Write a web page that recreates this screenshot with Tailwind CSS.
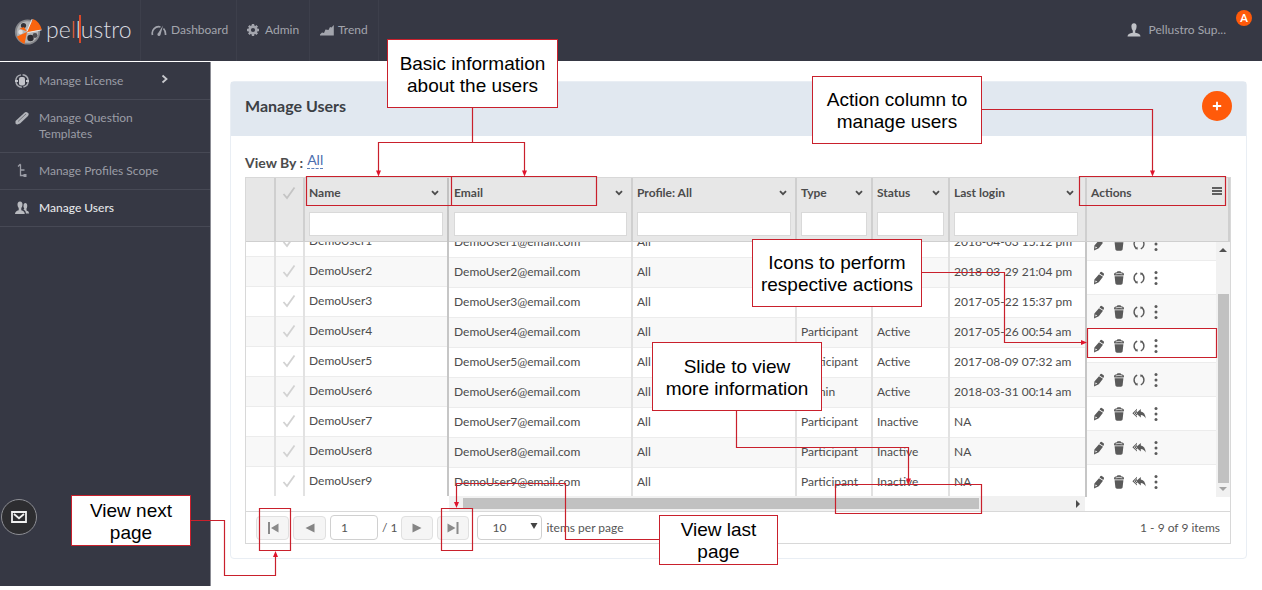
<!DOCTYPE html>
<html lang="en">
<head>
<meta charset="utf-8">
<title>Pellustro - Manage Users</title>
<script src="https://cdn.jsdelivr.net/npm/@tailwindcss/browser@4"></script>
</head>
<body class="relative min-h-screen bg-white font-['Lato',sans-serif] text-[12px] leading-4 text-[#4c4c4c]">
<svg class="hidden" aria-hidden="true">
  <symbol id="check" viewBox="0 0 14 14"><path d="M1.5 8 5 12 12.5 1.5" fill="none" stroke="currentColor" stroke-width="1.8"/></symbol>
  <symbol id="chev" viewBox="0 0 8 6"><path d="M1 1.2 4 4.2 7 1.2" fill="none" stroke="currentColor" stroke-width="1.8"/></symbol>
  <symbol id="pencil" viewBox="0 0 12 14"><path d="M7.3 1.2Q8 .6 8.800 1.100L10.600 2.300Q11.300 2.900 10.900 3.700L10.300 5 6.500 2.600zM6 3.200 10 5.800 5.800 11.200 1 13.400 1.400 8.600z" fill="currentColor"/><path d="M2.600 9.400l1.600 1-1.900 1.100z" fill="#fff"/></symbol>
  <symbol id="trash" viewBox="0 0 12 14"><path d="M1 3.4Q1 1.4 4 1.2L4.4.3H7.6L8 1.2Q11 1.4 11 3.4L10.6 4.4H1.4zM1.6 5.2H10.4L9.6 12.6Q9.4 13.7 8 13.7H4Q2.6 13.7 2.4 12.6z" fill="currentColor"/><path d="M2.6 2.9Q6 1.8 9.4 2.9" stroke="#fff" stroke-width=".7" fill="none"/></symbol>
  <symbol id="cycle" viewBox="0 0 12 14"><path d="M4.2 2.2A5.2 5.2 0 0 0 3.4 11.3M7.8 11.8A5.2 5.2 0 0 0 8.6 2.7" fill="none" stroke="currentColor" stroke-width="1.4"/><path d="M1.8 12 4.800 12.400 4.400 9.800zM10.2 2 7.200 1.600 7.600 4.200z" fill="currentColor"/></symbol>
  <symbol id="reply" viewBox="0 0 14 12"><path d="M5 .8 .4 5.200 5 9.600M8.800 1V3.400Q13.200 4 13.700 10.600 12 7.200 8.800 7.100V9.500L4 5.200z" fill="currentColor"/><path d="M5.600 1.800 2.200 5.200 5.600 8.800" fill="none" stroke="#fff" stroke-width=".7"/></symbol>
  <symbol id="dots" viewBox="0 0 4 16"><circle cx="2" cy="2.500" r="1.500" fill="currentColor"/><circle cx="2" cy="8" r="1.500" fill="currentColor"/><circle cx="2" cy="13.500" r="1.500" fill="currentColor"/></symbol>
</svg>

<header class="flex h-[61px] items-stretch bg-[#363844] text-[#a3a5ad]">
  <a href="#" class="flex w-[141px] items-center border-r border-[#3d3f4b] pl-3.5" aria-label="pellustro">
    <svg class="h-7 w-7 shrink-0" viewBox="0 0 28 28"><circle cx="13.500" cy="15" r="12.600" fill="#85868b"/><circle cx="13.500" cy="15" r="10.800" fill="#b3b4b6"/><circle cx="9.500" cy="8.500" r="2.600" fill="#35343a"/><circle cx="16.500" cy="21" r="3.200" fill="#2c2b31"/><circle cx="6.500" cy="15" r="2.300" fill="#dedede"/><circle cx="21" cy="18.500" r="2.400" fill="#4c4b50"/><path d="M13 14.500 19 2Q25.500 4.500 27.800 12.500L13.500 15.500zM13 15 3 19.500Q5 24.500 10.500 27zM13 14.500 5.500 11.500 10 10z" fill="#f9640f"/><path d="M13 14.500 18.200 2M13.500 15.500 27.500 13" stroke="#fff" stroke-width=".8"/></svg>
    <span class="relative ml-1 -mt-1 text-[23px] leading-7 font-light text-[#dcdde1]">pe<span class="text-[#e8643a]">l</span>lustro<i class="absolute top-0 left-[33px] h-7 w-0.5 bg-[#d9482a]"></i></span>
  </a>
  <nav class="flex">
    <a href="#" class="flex w-24 items-center border-r border-[#3d3f4b] pb-0.5 pl-2.5"><svg class="mr-1 h-3.5 w-4" viewBox="0 0 16 14"><path d="M1.500 12A6.500 6.500 0 0 1 9.500 4M12.500 5.500Q14.800 8 14.500 12" fill="none" stroke="currentColor" stroke-width="1.700"/><path d="M12 2.500 9.600 11.500A1.600 1.600 0 1 1 7.200 10z" fill="currentColor"/></svg>Dashboard</a>
    <a href="#" class="flex w-[73px] items-center border-r border-[#3d3f4b] pb-0.5 pl-2.5"><svg class="mr-1.5 h-3 w-3" viewBox="0 0 12 12"><circle cx="6" cy="6" r="3.400" fill="none" stroke="currentColor" stroke-width="2.600"/><path d="M6 0V2.500M6 9.500V12M0 6H2.500M9.500 6H12M1.800 1.800 3.500 3.500M8.500 8.500l1.700 1.700M10.200 1.800 8.500 3.500M3.500 8.500 1.800 10.200" stroke="currentColor" stroke-width="2.400"/></svg>Admin</a>
    <a href="#" class="flex w-[69px] items-center border-r border-[#3d3f4b] pb-0.5 pl-2.5"><svg class="mr-1 h-3 w-3.5" viewBox="0 0 14 12"><path d="M0 11.500V10.500L2 8.500 4 9 5.500 5.500 8.500 6 10 3 11.500 3.500 13.800 1V11.500z" fill="currentColor"/></svg>Trend</a>
  </nav>
  <div class="ml-auto flex items-center pr-2.5 pb-0.5">
    <svg class="mr-2 h-3.5 w-3.5" viewBox="0 0 14 14"><path d="M7 .3Q9.800 .3 9.600 3.800 9.400 6.500 8.200 7.700V9.800Q13.300 10.400 13.500 13.500H.5Q.7 10.400 5.800 9.800V7.700Q4.600 6.500 4.400 3.800 4.200 .3 7 .3z" fill="#c0c2c7"/></svg>
    <a href="#" class="mr-2.5">Pellustro Sup...</a>
    <span class="mb-6 flex h-4 w-4 items-center justify-center rounded-full bg-[#ff5a0a] text-[11px] font-bold text-white">A</span>
  </div>
</header>

<div class="flex pt-px">
  <aside class="min-h-[524px] w-[210px] shrink-0 bg-[#363844] text-[#9b9da6] shadow-[1px_0_0_#8b8c94]">
    <nav class="flex flex-col pt-px">
      <a href="#" class="flex border-b border-[#474955] py-2.5 pl-3.5"><svg class="mr-[9px] h-4 w-4" viewBox="0 0 16 16"><circle cx="8" cy="8" r="6.200" fill="none" stroke="#a9abb2" stroke-width="1.500" stroke-dasharray="8 1.700"/><rect x="5" y="4" width="6" height="8.500" rx="2" fill="#c3c4ca"/><path d="M1 8h3M12 8h3" stroke="#c3c4ca" stroke-width="2"/></svg><span class="w-[122px]">Manage License</span><svg class="h-3 w-2" viewBox="0 0 8 12"><path d="M1.500 2.500 5.500 6 1.500 9.500" fill="none" stroke="#c8c9ce" stroke-width="1.800"/></svg></a>
      <a href="#" class="flex border-b border-[#474955] py-2.5 pl-3.5"><svg class="mr-[9px] h-4 w-4" viewBox="0 0 16 16"><path d="M1.500 11 11 2.200Q13 1.200 14.600 3.600 15 5 14 6L6 13.600Q3 15.200 1.500 13.500z" fill="#b2b4ba"/><path d="M4 11.500 12 4" stroke="#6b6d76" stroke-width=".9"/></svg><span>Manage Question<br>Templates</span></a>
      <a href="#" class="flex border-b border-[#474955] py-2.5 pl-3.5"><svg class="mr-[9px] h-4 w-4" viewBox="0 0 16 16"><path d="M6.500 1.500V12.500H11M6.500 7H10.500M4 3.500 6.500 1" fill="none" stroke="currentColor" stroke-width="1.300"/><path d="M9.500 11h3v3h-3z" fill="currentColor"/></svg>Manage Profiles Scope</a>
      <a href="#" class="flex border-b border-[#474955] py-2.5 pl-3.5 font-medium text-[#e4e5e8]"><svg class="mr-[9px] h-4 w-4" viewBox="0 0 16 16"><path d="M6 1.500Q8.700 1.500 8.500 5 8.300 7 7.300 8V10.300Q10.500 11 10.800 14H1Q1 11.300 4.700 10.300V8Q3.700 7 3.500 5 3.300 1.500 6 1.500zM11.200 3Q13.500 3 13.200 6.500 13 8 12.500 8.500V10.500Q15 11 15.200 13.500H12Q11.800 10.500 9.500 9.500L10.300 8.500Q9 7 9.600 4.500 10 3 11.200 3z" fill="#b8babf"/></svg>Manage Users</a>
    </nav>
  </aside>

  <main class="min-w-0 flex-1 pt-[19px] pr-[15px] pl-5">
    <section class="rounded border border-[#e9eef4] pb-3.5">
      <div class="flex h-[54px] items-center justify-between bg-[#e1e8f0] px-3.5 pb-1.5">
        <h1 class="text-[16px] leading-5 font-bold text-[#3c4045]">Manage Users</h1>
        <button type="button" aria-label="Add user" class="flex h-[30px] w-[30px] items-center justify-center rounded-full bg-[#ff5a0a]"><svg class="h-2.5 w-2.5" viewBox="0 0 10 10"><path d="M5 .8V9.200M.8 5H9.200" stroke="#fff" stroke-width="1.800"/></svg></button>
      </div>
      <div class="flex h-[41px] items-end gap-1 px-3.5 pb-1.5 text-[14px] leading-4 font-bold"><span>View By :</span><a href="#" class="mb-0.5 border-b border-dashed border-[#5c80bb] font-normal text-[#4b6eae]">All</a></div>

      <div class="mr-[15px] ml-3.5 border border-[#d8d8d8]">
        <div class="flex h-[333px]">
          <!-- frozen left columns -->
          <div class="w-[203px] shrink-0">
            <table class="w-full table-fixed border-collapse">
              <colgroup><col class="w-[29px]"><col class="w-[29px]"><col></colgroup>
              <thead class="bg-[#e7e7e7]"><tr class="h-[63px] border-b border-[#cfcfcf] text-left align-top font-bold">
                <th class="border-r-2 border-[#cfcfcf]"></th>
                <th class="border-r-2 border-[#cfcfcf]"><label class="relative mt-2 ml-1.5 block h-3.5 w-3.5"><input type="checkbox" aria-label="Select all" class="absolute inset-0 appearance-none"><svg class="h-3.5 w-3.5 text-[#c4c4c4]"><use href="#check"/></svg></label></th>
                <th class="border-r-2 border-[#c2c2c2] px-[4px]"><div class="flex h-[34px] items-center justify-between pr-1 pb-1"><span>Name</span><button type="button" aria-label="Name menu"><svg class="h-1.5 w-2"><use href="#chev"/></svg></button></div><input aria-label="Filter name" class="block h-6 w-full border border-[#d9d9d9] bg-white"></th>
              </tr></thead>
            </table>
            <div class="h-[255px] overflow-hidden"><table class="-mt-4 w-full table-fixed border-collapse"><colgroup><col class="w-[29px]"><col class="w-[29px]"><col></colgroup><tbody id="left"></tbody></table></div>
          </div>
          <!-- scrolling columns -->
          <div class="flex min-w-0 flex-1 flex-col">
            <table class="w-full table-fixed border-collapse">
              <colgroup><col class="w-[183px]"><col class="w-[164px]"><col class="w-[76px]"><col class="w-[77px]"><col></colgroup>
              <thead class="bg-[#e7e7e7]"><tr id="midhead" class="h-[63px] border-b border-[#cfcfcf] text-left align-top font-bold"></tr></thead>
            </table>
            <div class="h-[255px] overflow-hidden"><table class="-mt-[15px] w-full table-fixed border-collapse"><colgroup><col class="w-[183px]"><col class="w-[164px]"><col class="w-[76px]"><col class="w-[77px]"><col></colgroup><tbody id="mid"></tbody></table></div>
            <div class="flex h-[15px] items-center bg-[#f1f1f1] pl-3.5"><div class="h-[11px] w-[516px] bg-[#c1c1c1]"></div><svg class="mr-1 ml-auto h-2 w-1.5" viewBox="0 0 6 8"><path d="M1 0 5 4 1 8z" fill="#4c4c4c"/></svg></div>
          </div>
          <!-- frozen action column -->
          <div class="w-[145px] shrink-0">
            <table class="w-full table-fixed border-collapse"><thead class="bg-[#e7e7e7]"><tr class="h-[63px] border-b border-[#cfcfcf] text-left align-top font-bold"><th class="border-r-2 border-l-2 border-[#cfcfcf] pr-1.5 pl-1"><div class="flex h-[34px] items-center justify-between pb-1"><span>Actions</span><button type="button" aria-label="Column options"><svg class="mb-1 h-2 w-2.5" viewBox="0 0 10 8"><path d="M0 1H10M0 4H10M0 7H10" stroke="#333" stroke-width="1.600"/></svg></button></div></th></tr></thead></table>
            <div class="flex h-[255px] overflow-hidden border-l-2 border-[#c6c6c6]">
              <table class="-mt-[50px] flex-1 table-fixed border-collapse self-start"><tbody id="acts"></tbody></table>
              <div class="flex w-3.5 flex-col items-center bg-[#f1f1f1]"><svg class="mt-1.5 h-1 w-2" viewBox="0 0 8 4"><path d="M0 4 4 0 8 4z" fill="#505050"/></svg><div class="mt-[42px] h-[189px] w-[11px] bg-[#c1c1c1]"></div><svg class="mt-1 h-1 w-2" viewBox="0 0 8 4"><path d="M0 0 4 4 8 0z" fill="#a3a3a3"/></svg></div>
            </div>
          </div>
        </div>
        <div class="flex h-8 items-center border-t border-[#d8d8d8] pl-2.5 text-[#555]">
          <button type="button" aria-label="First page" class="mr-1 flex h-6 w-[33px] items-center justify-center rounded border border-[#e0e0e0] bg-[#f5f5f5]"><svg class="h-3 w-3" viewBox="0 0 12 12"><path d="M1 0h2v12H1zM11.500 1.500V10.500L4 6z" fill="#8a8a8a"/></svg></button>
          <button type="button" aria-label="Previous page" class="mr-1 flex h-6 w-[33px] items-center justify-center rounded border border-[#e0e0e0] bg-[#f5f5f5]"><svg class="h-2.5 w-2.5" viewBox="0 0 10 10"><path d="M9.500.5V9.500L.5 5z" fill="#858585"/></svg></button>
          <input aria-label="Page" value="1" class="mr-1 h-[25px] w-12 rounded border border-[#d0d0d0] px-2.5">
          <span class="mr-1">/ 1</span>
          <button type="button" aria-label="Next page" class="mr-1 flex h-6 w-8 items-center justify-center rounded border border-[#e0e0e0] bg-[#f5f5f5]"><svg class="h-2.5 w-2.5" viewBox="0 0 10 10"><path d="M.5.5V9.500L9.500 5z" fill="#858585"/></svg></button>
          <button type="button" aria-label="Last page" class="mr-2 flex h-6 w-8 items-center justify-center rounded border border-[#e0e0e0] bg-[#f5f5f5]"><svg class="h-3 w-3" viewBox="0 0 12 12"><path d="M9.500 0h2v12h-2zM.5 1.500V10.500L8.500 6z" fill="#8a8a8a"/></svg></button>
          <div class="relative mr-1"><select aria-label="Items per page" class="block h-[25px] w-[65px] appearance-none rounded border border-[#d0d0d0] bg-white pl-3.5"><option>10</option></select><svg class="pointer-events-none absolute top-2 right-1 h-1.5 w-2" viewBox="0 0 8 6"><path d="M.5 0H7.500L4 6z" fill="#444"/></svg></div>
          <span>items per page</span>
          <span class="mr-2.5 ml-auto">1 - 9 of 9 items</span>
        </div>
      </div>
    </section>
  </main>
</div>

<button type="button" aria-label="Messages" class="absolute top-[499px] left-px flex h-9 w-9 items-center justify-center rounded-full border border-[#8d8e94] bg-[#2d2d30]"><svg class="h-3 w-4" viewBox="0 0 16 12"><path d="M1 1H15V11H1zM3 3 8 7.200 13 3" fill="none" stroke="#f0f0f0" stroke-width="1.800"/></svg></button>

<!-- annotations -->
<svg class="pointer-events-none absolute top-0 left-0 h-[590px] w-[1262px]" viewBox="0 0 1262 590" fill="none" stroke="#c9202c" stroke-width="1.200">
  <path d="M306.500 176.500H596.500V205.500H306.500zM451.500 176.500V205.500M1079.500 176.500H1225.500V205.500H1079.500zM1087.500 328.500H1216.500V357.500H1087.500zM835.500 484.500H981.500V513.500H835.500zM259.500 508.500H290.500V550.500H259.500zM441.500 508.500H472.500V550.500H441.500z"/>
  <path d="M472.500 107V142.500M378.500 172V142.500H524.500V172M981 109.500H1152.500V172M921 272.500H1004.500V342.500H1082M736.500 410V447.500H908.500V480M190 520.500H224.500V575.500H275.500V555M659 539.500H565.500V483.500H456.500V503"/>
  <path d="M376 170.500h5L378.500 176.500zM522 170.500h5L524.500 176.500zM1150 170.500h5L1152.500 176.500zM1081 340v5L1087 342.500zM906 478.500h5L908.500 484.500zM273 557h5L275.500 551zM454 502h5L456.500 508z" fill="#e0142c" stroke="none"/>
</svg>
<div class="absolute top-[39px] left-[387px] flex h-[69px] w-[171px] items-center justify-center border border-[#c9202c] bg-white pt-0.5 text-center font-['Liberation_Sans',sans-serif] text-[19px] leading-[22px] text-black">Basic information<br>about the users</div>
<div class="absolute top-[76px] left-[812px] flex h-[68px] w-[170px] items-center justify-center border border-[#c9202c] bg-white pt-0.5 text-center font-['Liberation_Sans',sans-serif] text-[19px] leading-[22px] text-black">Action column to<br>manage users</div>
<div class="absolute top-[239px] left-[752px] flex h-[68px] w-[170px] items-center justify-center border border-[#c9202c] bg-white pt-0.5 text-center font-['Liberation_Sans',sans-serif] text-[19px] leading-[22px] text-black">Icons to perform<br>respective actions</div>
<div class="absolute top-[342px] left-[652px] flex h-[69px] w-[170px] items-center justify-center border border-[#c9202c] bg-white pt-0.5 text-center font-['Liberation_Sans',sans-serif] text-[19px] leading-[22px] text-black">Slide to view<br>more information</div>
<div class="absolute top-[495px] left-[71px] flex h-[51px] w-[120px] items-center justify-center border border-[#c9202c] bg-white pt-0.5 text-center font-['Liberation_Sans',sans-serif] text-[19px] leading-[22px] text-black">View next<br>page</div>
<div class="absolute top-[515px] left-[659px] flex h-[50px] w-[119px] items-center justify-center border border-[#c9202c] bg-white pt-0.5 text-center font-['Liberation_Sans',sans-serif] text-[19px] leading-[22px] text-black">View last<br>page</div>

<script>
const users = [
  ['','','2018-04-03 15:12 pm'],
  ['','','2018-03-29 21:04 pm'],
  ['','','2017-05-22 15:37 pm'],
  ['Participant','Active','2017-05-26 00:54 am'],
  ['Participant','Active','2017-08-09 07:32 am'],
  ['Admin','Active','2018-03-31 00:14 am'],
  ['Participant','Inactive','NA'],
  ['Participant','Inactive','NA'],
  ['Participant','Inactive','NA']
];
document.getElementById('midhead').innerHTML = ['Email','Profile: All','Type','Status','Last login'].map(h =>
  `<th class="border-r-2 border-[#cfcfcf] px-[4px] first:pl-[5px] last:border-r-0 last:pr-[7px]"><div class="flex h-[34px] items-center justify-between pr-1 pb-1"><span>${h}</span><button type="button" aria-label="${h} menu"><svg class="h-1.5 w-2"><use href="#chev"/></svg></button></div><input aria-label="Filter ${h}" class="block h-6 w-full border border-[#d9d9d9] bg-white"></th>`).join('');
document.getElementById('left').innerHTML = users.map((u, i) =>
  `<tr class="h-[30px] border-t border-[#ececec] even:bg-[#f8f8f8]"><td class="border-r-2 border-[#e2e2e2]"></td><td class="border-r-2 border-[#e2e2e2]"><label class="relative ml-1.5 block h-3.5 w-3.5"><input type="checkbox" aria-label="Select DemoUser${i + 1}" class="absolute inset-0 appearance-none"><svg class="h-3.5 w-3.5 text-[#d2d2d2]"><use href="#check"/></svg></label></td><td class="border-r-2 border-[#c6c6c6] px-[4px]">DemoUser${i + 1}</td></tr>`).join('');
document.getElementById('mid').innerHTML = users.map((u, i) =>
  `<tr class="h-[30px] border-t border-[#ececec] even:bg-[#f8f8f8]">` + [`DemoUser${i + 1}@email.com`, 'All', ...u].map(t => `<td class="border-r-2 border-[#e2e2e2] px-[4px] first:pl-[5px] last:border-r-0">${t}</td>`).join('') + `</tr>`).join('');
document.getElementById('acts').innerHTML = users.map((u, i) =>
  `<tr class="h-[34px] border-t border-[#ececec] even:bg-[#f8f8f8]"><td class="pt-0.5 pl-1.5"><div class="flex items-center text-[#5a5a5a]"><button type="button" class="mr-2" aria-label="Edit"><svg class="block h-3.5 w-3"><use href="#pencil"/></svg></button><button type="button" class="mr-[7px]" aria-label="Delete"><svg class="block h-3.5 w-3"><use href="#trash"/></svg></button><button type="button" class="mr-2 flex w-3.5 justify-center" ` +
  (i < 6 ? `aria-label="Reset"><svg class="block h-3.5 w-3"><use href="#cycle"/></svg></button>` : `aria-label="Resend"><svg class="block h-3 w-3.5"><use href="#reply"/></svg></button>`) +
  `<button type="button" aria-label="More"><svg class="block h-4 w-1"><use href="#dots"/></svg></button></div></td></tr>`).join('');
</script>
</body>
</html>
